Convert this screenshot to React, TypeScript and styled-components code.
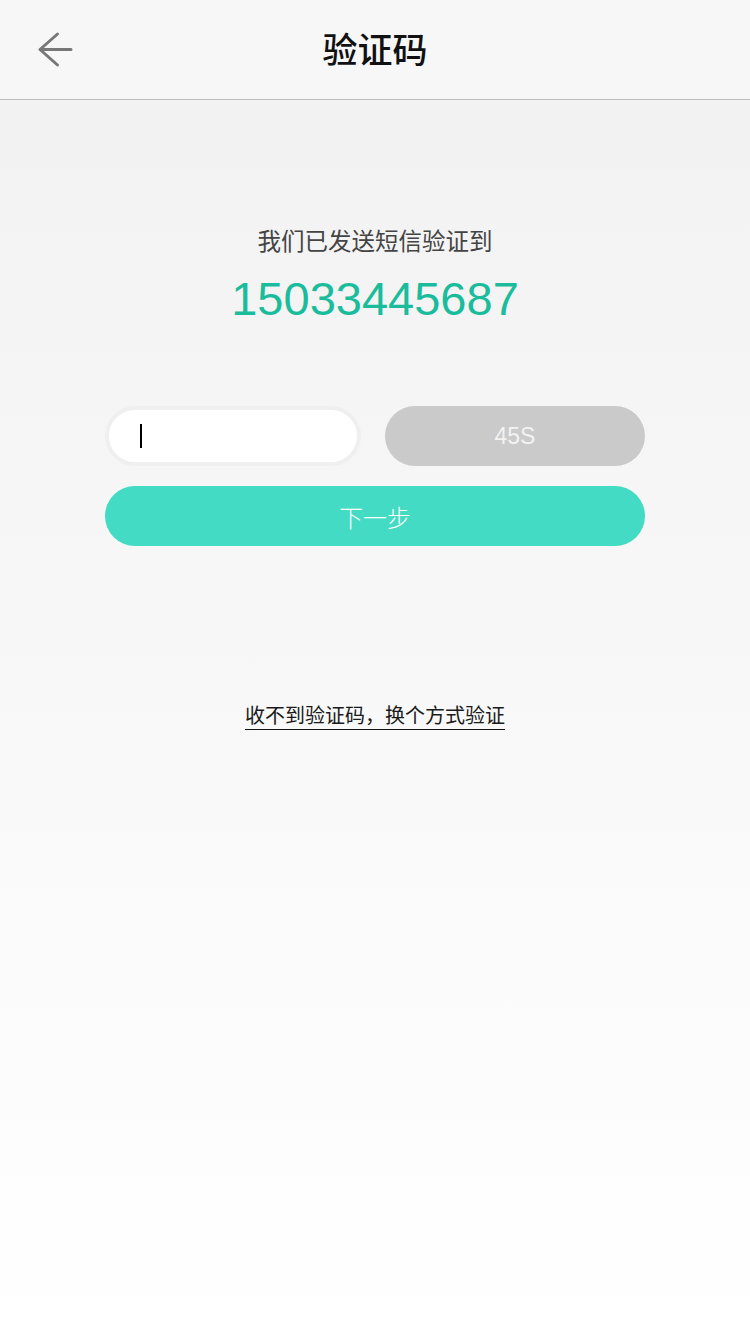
import React from "react";
import styled, { createGlobalStyle } from "styled-components";

const Global = createGlobalStyle`
  html, body { margin: 0; padding: 0; }
  body { font-family: "Liberation Sans", "Noto Sans CJK SC", sans-serif; }
`;

const Page = styled.div`
  width: 750px;
  height: 1334px;
  display: flex;
  flex-direction: column;
  background: #f7f7f7;
  overflow: hidden;
`;

const Header = styled.header`
  height: 99px;
  flex: none;
  position: relative;
  display: flex;
  align-items: center;
  justify-content: center;
  background: #f7f7f7;
  border-bottom: 1px solid #bcbcbc;
`;

const Back = styled.button`
  position: absolute;
  left: 36px;
  top: 30px;
  width: 40px;
  height: 40px;
  padding: 0;
  border: none;
  background: none;
  display: flex;
`;

const Title = styled.h1`
  margin: 0 0 4px;
  font-size: 35px;
  font-weight: 500;
  color: #111;
  font-family: "Noto Sans CJK SC", sans-serif;
`;

const Body = styled.main`
  flex: 1;
  display: flex;
  flex-direction: column;
  align-items: center;
  background: linear-gradient(#f2f2f2 0%, #f7f7f7 40%, #ffffff 100%);
`;

const Prompt = styled.p`
  margin: 123px 0 0;
  font-size: 23.5px;
  line-height: 34px;
  color: #444;
  font-family: "Noto Sans CJK SC", sans-serif;
`;

const Phone = styled.div`
  margin-top: 14px;
  font-size: 47px;
  line-height: 56px;
  color: #1abc9c;
  font-family: "Liberation Sans", Arial, sans-serif;
`;

const Form = styled.div`
  margin-top: 79px;
  width: 540px;
  display: flex;
  flex-direction: column;
  gap: 20px;
`;

const Row = styled.div`
  display: flex;
  gap: 24px;
  height: 60px;
`;

const InputWrap = styled.div`
  width: 256px;
  box-sizing: border-box;
  border: 4px solid #efefef;
  border-radius: 30px;
  background: #fff;
  display: flex;
  align-items: center;
  padding-left: 31px;
`;

const Caret = styled.span`
  width: 1.5px;
  height: 24px;
  background: #000;
`;

const Pill = styled.button<{ $bg: string; $color: string }>`
  flex: 1 0 auto;
  height: 60px;
  border: none;
  border-radius: 30px;
  background: ${(p) => p.$bg};
  color: ${(p) => p.$color};
  font-size: 23px;
  font-family: "Liberation Sans", "Noto Sans CJK SC", sans-serif;
  display: flex;
  align-items: center;
  justify-content: center;
  padding: 0;
`;

const NextButton = styled(Pill)`
  flex: none;
  width: 100%;
`;

const NextText = styled.span`
  font-family: "Noto Sans CJK SC", sans-serif;
  font-weight: 300;
  font-size: 24px;
`;

const Alt = styled.a`
  margin-top: 156px;
  font-size: 20px;
  line-height: 26px;
  color: #1a1a1a;
  font-family: "Noto Sans CJK SC", sans-serif;
  border-bottom: 1.5px solid #111;
  padding-bottom: 1px;
  text-decoration: none;
`;

export default function App() {
  return (
    <>
      <Global />
      <Page>
        <Header>
          <Back aria-label="back">
            <svg width="40" height="40" viewBox="0 0 40 40">
              <path
                d="M21.5 4 L4 19.5 L21.5 35 M4 19.5 H35"
                fill="none"
                stroke="#777"
                strokeWidth="3"
                strokeLinecap="round"
                strokeLinejoin="round"
              />
            </svg>
          </Back>
          <Title>验证码</Title>
        </Header>
        <Body>
          <Prompt>我们已发送短信验证到</Prompt>
          <Phone>15033445687</Phone>
          <Form>
            <Row>
              <InputWrap>
                <Caret />
              </InputWrap>
              <Pill $bg="#cacaca" $color="#f2f2f2">45S</Pill>
            </Row>
            <NextButton $bg="#43dbc3" $color="#ffffff">
              <NextText>下一步</NextText>
            </NextButton>
          </Form>
          <Alt>收不到验证码，换个方式验证</Alt>
        </Body>
      </Page>
    </>
  );
}
